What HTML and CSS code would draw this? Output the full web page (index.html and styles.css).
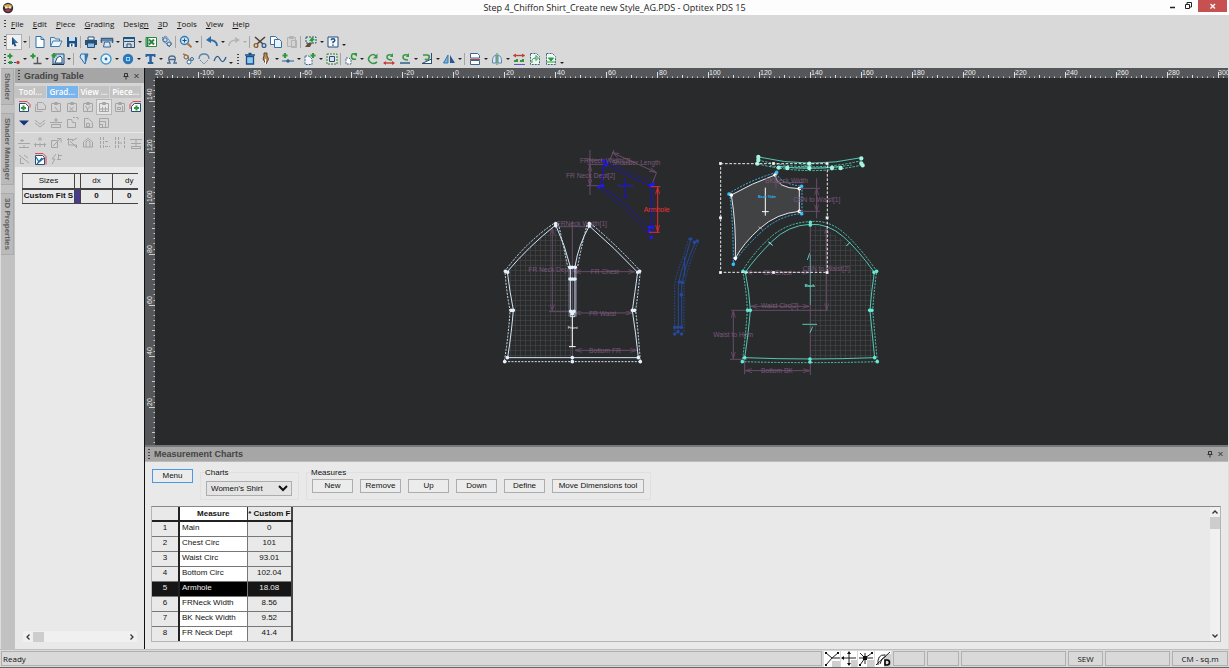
FILE: index.html
```html
<!DOCTYPE html>
<html lang="en">
<head>
<meta charset="utf-8">
<title>Optitex PDS 15</title>
<link rel="stylesheet" href="styles.css">
</head>
<body>
<div class="app">
<header class="titlebar">
  <svg class="logo" viewBox="0 0 12 12"><circle cx="6" cy="6" r="5.2" fill="#3c2a35"/><path d="M1.5 4Q6 0 10.5 4L8 6H4Z" fill="#c9a94f"/><path d="M3 8Q6 12 9 8L6 7Z" fill="#b23a4a"/><path d="M3 4.500h2.500v2H3zM6.800 4.500h2.500v2H6.800z" fill="#f3ecd2"/></svg>
  <h1>Step 4_Chiffon Shirt_Create new Style_AG.PDS - Optitex PDS 15</h1>
  <div class="winbtns">
    <button aria-label="Minimize"><svg viewBox="0 0 16 12"><path d="M5 7.500h5" stroke="#222" stroke-width="1.500"/></svg></button>
    <button aria-label="Restore"><svg viewBox="0 0 16 12"><path d="M4.500 4.500h4v4h-4zM6 4V2.500h4.500V7H9" fill="none" stroke="#222"/></svg></button>
    <button class="close" aria-label="Close"><svg viewBox="0 0 16 12"><path d="M5.500 4l4.500 4.500M10 4L5.500 8.500" stroke="#fff" stroke-width="1.300"/></svg></button>
  </div>
</header>

<nav class="menubar">
  <i class="grip"></i>
  <button><u>F</u>ile</button><button><u>E</u>dit</button><button><u>P</u>iece</button><button><u>G</u>rading</button><button>Desig<u>n</u></button><button><u>3</u>D</button><button><u>T</u>ools</button><button><u>V</u>iew</button><button><u>H</u>elp</button>
</nav>

<div class="toolbar">
  <i class="grip"></i>
  <button class="tool on" aria-label="Select"><svg><path d="M6 3l6 6H9l1.500 3-2 .5L7.500 10 6 11z" fill="#1f4e79"/><path d="M6 3l6 6H9z" fill="#2f78b5"/></svg></button><i class="caret"></i><i class="sep"></i>
  <button class="tool" aria-label="New"><svg><path d="M4 2.500h5l3 3v8H4z" fill="#fff" stroke="#2f6ea8"/><path d="M9 2.500v3h3" fill="none" stroke="#2f6ea8"/></svg></button>
  <button class="tool" aria-label="Open"><svg><path d="M2.500 12.500v-9h4l1 1.500h4v2" fill="#dcebf6" stroke="#3e7cab"/><path d="M2.500 12.500l2.500-5.500h9l-2.500 5.500z" fill="#eaf4fb" stroke="#3e7cab"/></svg></button>
  <button class="tool" aria-label="Save"><svg><path d="M3 3h9l1 1v9H3z" fill="#1d4f86"/><path d="M5 3h6v4H5z" fill="#bfe0f5"/><path d="M5.500 9.500h5V13h-5z" fill="#fff"/><path d="M7 10h1.500v2.500H7z" fill="#1d4f86"/></svg></button><i class="sep"></i>
  <button class="tool" aria-label="Print"><svg><path d="M5 3h6v3H5z" fill="#fff" stroke="#274f78"/><path d="M2 6h12v5H2z" fill="#274f78"/><path d="M4.500 9h7v4.500h-7z" fill="#8ebfe2" stroke="#274f78"/></svg></button>
  <button class="tool" aria-label="Plot"><svg><path d="M2.500 9V4.500h11V9M1.500 6.500h13" fill="none" stroke="#3a5f86" stroke-width="1.400"/><path d="M4.500 13l1-5h5l1 5z" fill="#d4e8f6" stroke="#3a5f86"/><path d="M3 5h10v2H3z" fill="#5b87ae"/></svg></button><i class="caret"></i>
  <button class="tool" aria-label="Plot layout"><svg><path d="M2.500 3.500h11v4h-11z" fill="#b9d7ec" stroke="#274f78"/><path d="M2.500 8v5.500h11V8M6 13v-3h4v3" fill="none" stroke="#274f78"/><path d="M2.500 4h11" stroke="#274f78" stroke-width="2"/></svg></button><i class="caret"></i>
  <button class="tool" aria-label="Export to Excel"><svg><path d="M3 3.500h10.500v9H3z" fill="#fff" stroke="#2c8443"/><path d="M3.500 4h2v8h-2z" fill="#2c8443"/><path d="M6 5.500l5 5M11 5.500l-5 5" stroke="#2c8443" stroke-width="2"/></svg></button>
  <button class="tool" aria-label="Find piece"><svg><path d="M3 4l4-2 6 8-3 3z" fill="#cfe2f1" stroke="#3a6791" stroke-dasharray="1.500 1"/><circle cx="6" cy="6" r="2.200" fill="none" stroke="#3a6791"/><circle cx="10" cy="10" r="2" fill="none" stroke="#3a6791"/></svg></button><i class="sep"></i>
  <button class="tool" aria-label="Zoom"><svg><circle cx="6.500" cy="6.500" r="4" fill="#c5e5f8" stroke="#347ab2" stroke-width="1.400"/><path d="M6.500 4.500v4M4.500 6.500h4" stroke="#1d4f86"/><path d="M9.500 9.500l4 3.800" stroke="#b5713a" stroke-width="2"/></svg></button><i class="caret"></i><i class="sep"></i>
  <button class="tool" aria-label="Undo"><svg><path d="M13 12Q13 6 5 6" fill="none" stroke="#2c6da4" stroke-width="1.800"/><path d="M2 6l5-4v7z" fill="#2c6da4"/></svg></button><i class="caret"></i>
  <button class="tool off" aria-label="Redo"><svg><path d="M3 12Q3 6 11 6" fill="none" stroke="#b5b5b5" stroke-width="1.500"/><path d="M14 6l-5-3v6z" fill="#b5b5b5"/></svg></button><i class="caret dim"></i><i class="sep"></i>
  <button class="tool" aria-label="Cut"><svg><path d="M3 3l8 7M13 3l-8 7" stroke="#4b4037" stroke-width="1.600"/><circle cx="4" cy="11.500" r="1.900" fill="none" stroke="#8c5a2a" stroke-width="1.300"/><circle cx="12" cy="11.500" r="1.900" fill="none" stroke="#2f5e8f" stroke-width="1.300"/></svg></button>
  <button class="tool" aria-label="Copy"><svg><path d="M2.500 2.500h5l2 2v6h-7z" fill="#fff" stroke="#3a6f9f"/><path d="M6.500 5.500h5l2 2v6h-7z" fill="#e9f3fa" stroke="#3a6f9f"/></svg></button>
  <button class="tool off" aria-label="Paste"><svg><path d="M3.500 3.500h8v9h-8zM5.500 2.500h4v2h-4zM7.500 6.500h5v7h-5z" fill="#d4d4d4" stroke="#b3b3b3"/></svg></button><i class="sep"></i>
  <button class="tool" aria-label="Send to modulate"><svg><path d="M3 3h10v6H3z" fill="#cfe4d3" stroke="#274f78" stroke-dasharray="2 1"/><path d="M9 10L8 7H6l3-4 3 3-2 .5z" fill="#2e9a3c"/><path d="M2 13l3-4h4l-2 4z" fill="#6b4a35"/></svg></button><i class="caret"></i>
  <button class="tool" aria-label="Help"><svg><path d="M3 3h10v10H3z" fill="#f6fafd" stroke="#274f78"/><path d="M6.200 6.200Q6.200 4.800 8 4.800T9.800 6.400Q9.800 7.200 8 8v1.200" fill="none" stroke="#1d4f86" stroke-width="1.500"/><path d="M7.200 10.500h1.600v1.300H7.200z" fill="#1d4f86"/></svg></button><i class="caret low"></i>
</div>

<div class="toolbar">
  <i class="grip"></i>
  <button class="tool" aria-label="Add point"><svg><path d="M2 11.500h12" stroke="#274f78" stroke-dasharray="2 1"/><path d="M4 2.500v5M1.500 5h5" stroke="#2e9a3c" stroke-width="2"/><path d="M3 10h3v3H3z" fill="#2f9b40"/><circle cx="12" cy="11.500" r="1.700" fill="#c33c3c"/></svg></button><i class="caret"></i>
  <button class="tool" aria-label="Add notch"><svg><path d="M5 2.500v5M2.500 5h5" stroke="#2e9a3c" stroke-width="2"/><path d="M5.500 12.500h8M9.500 6v6" stroke="#555" stroke-width="1.300"/></svg></button><i class="caret"></i>
  <button class="tool" aria-label="Trace piece"><svg><path d="M3 3h11v10H3z" fill="#bcd7e8" stroke="#274f78"/><path d="M5 12l2-5 3-2 2 2v5z" fill="#fff" stroke="#274f78"/><path d="M4 2v5M1.500 4.500h5" stroke="#2e9a3c" stroke-width="2"/><path d="M2 13.500h12" stroke="#1b3555"/></svg></button><i class="caret"></i><i class="sep"></i>
  <button class="tool" aria-label="Dart"><svg><path d="M5 3h7L9 13 4 6z" fill="#cfe7f6" stroke="#2c6da4"/><path d="M8.500 3H12L9 13z" fill="#2f78b5"/></svg></button><i class="caret"></i>
  <button class="tool" aria-label="Circle"><svg><circle cx="8" cy="8" r="5" fill="#e8f5fd" stroke="#4a9ad0" stroke-width="1.400"/><circle cx="8" cy="8" r="1.400" fill="#2c6da4"/></svg></button><i class="caret"></i>
  <button class="tool" aria-label="Button"><svg><circle cx="8" cy="8" r="5.200" fill="#2b79bd"/><path d="M6.500 6v4M9.500 6v4M6 6.500h4M6 9.500h4" stroke="#a9d4f0"/></svg></button><i class="caret"></i>
  <button class="tool" aria-label="Text"><svg><path d="M3.500 3h10v3h-1.500V5.300H9.800V11h1.500v2H5.800v-2h1.500V5.300H5V6H3.500z" fill="#2562a0"/></svg></button><i class="caret"></i>
  <button class="tool" aria-label="Pleat"><svg><path d="M3 12h3Q2.500 5 8 5t2 7h3M5 8.500h6" fill="none" stroke="#47698f" stroke-width="1.300"/></svg></button>
  <button class="tool" aria-label="Seam"><svg><path d="M3 3l5 2 1 5" fill="none" stroke="#b5713a" stroke-width="1.400"/><circle cx="6" cy="6" r="2" fill="#e8dcc9" stroke="#746050"/><circle cx="9" cy="11" r="2" fill="#fff" stroke="#2c6da4"/><circle cx="12" cy="8" r="1.500" fill="none" stroke="#2c6da4"/></svg></button>
  <button class="tool" aria-label="Arc"><svg><path d="M3 8Q3 3 8 3t5 5" fill="none" stroke="#5585ad" stroke-width="1.300"/><path d="M4 9l4 4 4-4" fill="none" stroke="#5585ad" stroke-dasharray="2 1"/></svg></button>
  <button class="tool" aria-label="Wave"><svg><path d="M2 10Q5 2 8 8t6-2" fill="none" stroke="#2c5f8f" stroke-width="1.300"/></svg></button><i class="caret low"></i>
  <i class="grip second"></i>
  <button class="tool" aria-label="Delete"><svg><path d="M4.500 5.500h7V13h-7z" fill="#8cc9ee" stroke="#1d4f86" stroke-width="1.300"/><path d="M3 4h10M6.500 2.500h3" stroke="#1d4f86" stroke-width="1.500"/></svg></button>
  <button class="tool" aria-label="Pen"><svg><path d="M6 2h3v3l1.500 3L8 13 5 8l1-3z" fill="#c08a56" stroke="#5a4130"/><path d="M7.500 8v5" stroke="#fff"/></svg></button><i class="caret"></i>
  <button class="tool" aria-label="Align"><svg><path d="M5 2v5M2.500 4.500h5" stroke="#2e9a3c" stroke-width="2"/><path d="M2 10h12" stroke="#2f5e8f"/><circle cx="8" cy="10" r="1.700" fill="#2f5e8f"/></svg></button><i class="caret"></i>
  <button class="tool" aria-label="Move piece"><svg><path d="M3 5h4l3 3v5.500H3z" fill="#f2f6fa" stroke="#3a6791" stroke-dasharray="2 1"/><path d="M8.500 4.500h5M11 2v5" stroke="#2e9a3c" stroke-width="2"/></svg></button><i class="caret"></i>
  <button class="tool" aria-label="Select internal"><svg><path d="M3 3h10v10H3z" fill="#dbe7da" stroke="#2e7a3c" stroke-dasharray="2 1"/><path d="M5.500 5.500h5v5h-5z" fill="#e9d9ef" stroke="#274f78"/></svg></button><i class="sep"></i>
  <button class="tool" aria-label="Rotate copy"><svg><path d="M3 7h3l2 2v4H3z" fill="#fff" stroke="#3a6791" stroke-dasharray="2 1"/><path d="M13 8Q8 9 8.500 5T13 4" fill="none" stroke="#2e9a3c" stroke-width="1.600"/><path d="M11 2h3v4z" fill="#2e9a3c"/></svg></button><i class="caret"></i>
  <button class="tool" aria-label="Rotate"><svg><path d="M12 11Q8 14 5 11T5 5t6 0" fill="none" stroke="#3a9748" stroke-width="1.600"/><path d="M12.500 2.500v5H8z" fill="#3a9748"/></svg></button>
  <button class="tool" aria-label="Rotate segment"><svg><path d="M11 9Q6 9 6 6t5-2" fill="none" stroke="#3a9748" stroke-width="1.600"/><path d="M12 2v4H9z" fill="#3a9748"/><path d="M3 12h10" stroke="#c33c3c" stroke-width="1.400"/><path d="M5 10l-3 2 3 2zM11 10l3 2-3 2z" fill="#c33c3c"/></svg></button>
  <button class="tool" aria-label="Rotate line"><svg><path d="M11 9Q6 9 6 6t5-2" fill="none" stroke="#3a9748" stroke-width="1.600"/><path d="M12 2v4H9z" fill="#3a9748"/><path d="M3 12h10" stroke="#2f5e8f" stroke-width="1.500"/></svg></button><i class="caret"></i>
  <button class="tool" aria-label="Turn to axis"><svg><path d="M12.500 2v11" stroke="#274f78"/><path d="M4 4h4q3 0 2 3t-4 1" fill="none" stroke="#3a9748" stroke-width="1.700"/><path d="M3 12.500h9.500V8z" fill="#fff" stroke="#274f78"/></svg></button><i class="caret"></i>
  <button class="tool" aria-label="Mirror"><svg><path d="M2.500 12L7 4v8z" fill="#79b0dc" stroke="#3a7ab0"/><path d="M9 4v8h5z" fill="#245b92"/></svg></button><i class="caret"></i><i class="sep"></i>
  <button class="tool" aria-label="Split"><svg><path d="M3.500 2.500h7l2 2V7h-9zM3.500 9.500h9v4h-9z" fill="#fff" stroke="#3a6791"/><path d="M3 8.500h10" stroke="#c33c3c"/></svg></button><i class="caret"></i>
  <button class="tool" aria-label="Fold"><svg><path d="M7 12H3.500Q3 5 7 4zM9 12h3.500Q13 5 9 4z" fill="#dceaf5" stroke="#5f87ab"/><path d="M8 2v12" stroke="#3f8f50"/></svg></button><i class="caret"></i>
  <button class="tool" aria-label="Walk"><svg><path d="M2.500 4.500h11" stroke="#c33c3c" stroke-width="1.400"/><path d="M5 2.500l-3 2 3 2zM11 2.500l3 2-3 2z" fill="#c33c3c"/><path d="M3 10h3V8M9 10h3V8" fill="none" stroke="#2e9a3c" stroke-width="2"/><path d="M3 13.500h11" stroke="#5c53c4"/></svg></button>
  <button class="tool" aria-label="Seam allowance"><svg><path d="M3.500 2.500h6l3 3v8h-9z" fill="#f0f6f2" stroke="#3a6791" stroke-dasharray="2 1"/><path d="M5 12q-1-5 4-5M9 4.500l2.500 2.500L9 9.500z" stroke="#2e9a3c" fill="none"/></svg></button>
  <button class="tool" aria-label="Remove seam"><svg><path d="M3.500 2.500h6l3 3v8h-9z" fill="#f0f6f2" stroke="#3a6791" stroke-dasharray="2 1"/><path d="M5.500 7L8 10l2.500-3zM3 11h10" stroke="#2e9a3c" fill="#2e9a3c"/></svg></button><i class="caret low"></i>
</div>

<main class="main">
  <aside class="sidetabs">
    <button>Shader</button><button>Shader Manager</button><button>3D Properties</button>
  </aside>

  <section class="grading">
    <div class="panelhead"><i class="grip"></i><h2>Grading Table</h2>
      <svg class="pin" viewBox="0 0 20 10"><path d="M3.500 2.500h3v3h-3zM2.500 5.500h5M5 5.500V8.500" fill="none" stroke="#333"/><path d="M13.500 3l4 4M17.500 3l-4 4" stroke="#333"/></svg></div>
    <div class="tabs"><button>Tool...</button><button class="active">Grad...</button><button>View ...</button><button>Piece...</button></div>
    <div class="icons first">
      <button class="tool" aria-label="Add size"><svg><path d="M3.500 4.500h6l3 3v5h-9z" fill="#fff" stroke="#274f78"/><path d="M7.500 6.500v5M5 9h5" stroke="#2e9a3c" stroke-width="2"/><path d="M3 2.500h8l3 3v3" fill="none" stroke="#e04848"/></svg></button>
      <button class="tool dis" aria-label="Copy grading"><svg><path d="M5.500 3.500h5l3 3v4h-8zM3.500 7.500v5h7"/><path d="M3 6h3"/></svg></button>
      <button class="tool dis" aria-label="Paste grading"><svg><path d="M3.500 4.500h9v8h-9zM6.500 3.500h3v2h-3zM7 8l3 4"/></svg></button>
      <button class="tool dis" aria-label="Paste X"><svg><path d="M3.500 4.500h9v8h-9zM6.500 3.500h3v2h-3zM5.500 8l4 4M9.500 8l-4 4"/></svg></button>
      <button class="tool dis" aria-label="Paste Y"><svg><path d="M3.500 4.500h9v8h-9zM6.500 3.500h3v2h-3zM5.500 7l2 3 3-3M7.500 10v2"/></svg></button>
      <button class="tool dis boxed" aria-label="Paste absolute"><svg><path d="M3.500 4.500h9v8h-9zM6.500 3.500h3v2h-3zM4 10h8M6.500 8v4M9.500 8v4"/></svg></button>
      <button class="tool dis" aria-label="Paste relative"><svg><path d="M3.500 4.500h9v8h-9zM6.500 3.500h3v2h-3zM5.500 8.500h3v2h-3zM10.500 7v5"/></svg></button>
      <button class="tool" aria-label="Import"><svg><path d="M12.500 4.500h-6l-3 3v5h9z" fill="#fff" stroke="#274f78"/><path d="M8.500 6.500v5M6 9h5" stroke="#2e9a3c" stroke-width="2"/><path d="M13 2.500H5l-3 3V10" fill="none" stroke="#e04848"/></svg></button>
      <button class="tool" aria-label="Down"><svg><path d="M3 5.500h10l-5 5z" fill="#15357e"/></svg></button>
      <button class="tool dis" aria-label="Merge"><svg><path d="M3 5.500q2 0 5 4 3-4 5-4M3 8l5 4 5-4"/></svg></button>
      <button class="tool dis" aria-label="Stack"><svg><path d="M2 7.500h12M3.500 9.500h9v3h-9zM6 5h4M8 3v4"/></svg></button>
      <button class="tool dis" aria-label="Grade copy"><svg><path d="M3.500 4.500h4l1 3h3v5h-8zM9 2.500h2M12 2.500h2v2"/></svg></button>
      <button class="tool dis" aria-label="Round"><svg><path d="M4.500 3.500h4l4 4v5h-8zM6.500 8.500h3v3h-3z"/></svg></button>
      <button class="tool dis" aria-label="Nest"><svg><path d="M3.500 3.500h9v9M3.500 3.500v9h9M3.500 6.500h6v6M3.500 9.500h3v3"/></svg></button>
    </div>
    <div class="icons second">
      <button class="tool dis" aria-label="Align left"><svg><path d="M2 8.500h12M3 12.500h10M6 4v3M4 5.500h4M8 10v3"/></svg></button>
      <button class="tool dis" aria-label="Align centre"><svg><path d="M2 9.500h12M3.500 8v4M8 2v4M6 4h4M8 8v4M12.500 8v4"/></svg></button>
      <button class="tool dis" aria-label="Proportional"><svg><path d="M3.500 5.500h6v7h-6zM5 11l7-7M9 3.500h4v4"/></svg></button>
      <button class="tool dis" aria-label="Along line"><svg><path d="M4.500 3v7h8v3M3 4.500h6M8 6l5-3M6 6l6 6"/></svg></button>
      <button class="tool dis" aria-label="Symmetric"><svg><path d="M3.500 12V7L8 3l4.500 4v5zM6 12V7l2-2 2 2v5"/></svg></button>
      <button class="tool dis" aria-label="Distribute left"><svg><path d="M4.500 2v12M7.500 2v12M9 6.500h4M9 11.500h5" stroke-dasharray="3 1"/></svg></button>
      <button class="tool dis" aria-label="Distribute right"><svg><path d="M3.500 2v12M6.500 2v12M7 8h4M12.500 2v12" stroke-dasharray="3 1"/></svg></button>
      <button class="tool dis" aria-label="Distribute down"><svg><path d="M2 4.500h12M3 8.500h10M8 5v6M3.500 11.500h9v2h-9z"/></svg></button>
      <button class="tool dis" aria-label="Angle"><svg><path d="M3 4l10 8M4.500 12V7M4 12.500h4M8 4l4 3"/></svg></button>
      <button class="tool" aria-label="Apply grading"><svg><path d="M3.500 4.500h7l2 2v7h-9z" fill="#fff" stroke="#274f78"/><path d="M4 6l3 5 5-4M5 13l5-6" fill="none" stroke="#2c6da4" stroke-width="1.300"/><path d="M3 2.500h8l3 3v8" fill="none" stroke="#e04848"/></svg></button>
      <button class="tool dis" aria-label="Grade rule"><svg><path d="M4 13l3-5h-3l4-5M10 4.500h4M9 8.500h4M10.500 3v5"/></svg></button>
    </div>
    <div class="gradebody">
      <table class="sizes">
        <colgroup><col class="c1"><col class="c2"><col class="c3"><col class="c4"></colgroup>
        <tr><th>Sizes</th><th></th><th>dx</th><th>dy</th></tr>
        <tr><td>Custom Fit S</td><td class="swatch"></td><td>0</td><td>0</td></tr>
      </table>
      <div class="hscroll"><button aria-label="Scroll left"><svg viewBox="0 0 8 8"><path d="M5.500 1.500L3 4l2.500 2.500" fill="none" stroke="#333" stroke-width="1.300"/></svg></button><i></i><button class="end" aria-label="Scroll right"><svg viewBox="0 0 8 8"><path d="M2.500 1.500L5 4 2.500 6.500" fill="none" stroke="#333" stroke-width="1.300"/></svg></button></div>
    </div>
  </section>

  <section class="work">
    <svg class="canvas" role="img" aria-label="Pattern workspace">
      <defs>
        <pattern id="hticks" x="453" y="68" width="51" height="10" patternUnits="userSpaceOnUse"><path d="M.5 4v6" stroke="#ddd"/><path d="M25.500 7v3" stroke="#ddd"/><path d="M5.500 8.500v1.500M10.500 8.500v1.500M15.500 8.500v1.500M20.500 8.500v1.500M30.500 8.500v1.500M35.500 8.500v1.500M40.500 8.500v1.500M46.500 8.500v1.500" stroke="#ccc"/></pattern>
        <pattern id="vticks" x="145" y="101" width="10" height="51" patternUnits="userSpaceOnUse"><path d="M4 .5h6M7 25.500h3M8.500 5.500H10M8.500 10.500H10M8.500 15.500H10M8.500 20.500H10M8.500 30.500H10M8.500 35.500H10M8.500 40.500H10M8.500 46.500H10" stroke="#ccc"/></pattern>
        <pattern id="mesh" width="15" height="15" patternUnits="userSpaceOnUse"><path d="M0 1.500h15M1.500 0v15" stroke="#434547" stroke-width="2"/></pattern>
        <marker id="arr" viewBox="0 0 24 14" refX="22" refY="7" markerWidth="24" markerHeight="14" markerUnits="userSpaceOnUse" orient="auto-start-reverse"><path d="M2 1l20 6L2 13" fill="none" stroke="context-stroke" stroke-width="2.500"/></marker>
      </defs>
      <g transform="translate(-145 -68)">
        <rect x="145" y="68" width="4000" height="10" fill="#55565a"/>
        <rect x="145" y="68" width="10" height="2000" fill="#55565a"/>
        <rect x="155" y="68" width="4000" height="10" fill="url(#hticks)"/>
        <rect x="145" y="78" width="10" height="2000" fill="url(#vticks)"/>
        <g class="rlabel">
          <text x="155" y="75">20</text><text x="200" y="75">-100</text><text x="251" y="75">-80</text><text x="302" y="75">-60</text><text x="353" y="75">-40</text><text x="404" y="75">-20</text><text x="455" y="75">0</text><text x="506" y="75">20</text><text x="557" y="75">40</text><text x="608" y="75">60</text><text x="659" y="75">80</text><text x="709" y="75">100</text><text x="760" y="75">120</text><text x="811" y="75">140</text><text x="862" y="75">160</text><text x="913" y="75">180</text><text x="964" y="75">200</text><text x="1015" y="75">220</text><text x="1066" y="75">240</text><text x="1117" y="75">260</text><text x="1168" y="75">280</text><text x="1218" y="75">300</text>
          <text transform="translate(152 100) rotate(-90)">140</text><text transform="translate(152 151) rotate(-90)">120</text><text transform="translate(152 202) rotate(-90)">100</text><text transform="translate(152 253) rotate(-90)">80</text><text transform="translate(152 304) rotate(-90)">60</text><text transform="translate(152 355) rotate(-90)">40</text><text transform="translate(152 406) rotate(-90)">20</text>
        </g>

        <g transform="translate(495 145) scale(.3333)">
          <path d="M182 240Q100 305 37 380Q44 440 55 495L38 638H232V515H226V365Q210 300 182 240Z" fill="url(#mesh)"/>
          <g class="dim">
            <path d="M232 228V650M182 245H300M162 500H225"/>
            <path class="ar" d="M172 250V498"/><path class="ar" d="M238 380H420"/><path class="ar" d="M238 504H412"/><path class="ar" d="M240 616H426"/><path class="ar" d="M285 60V122"/>
            <path d="M285 15V150M275 45H330M275 122H322M345 45L357 15M470 120L485 82M278 58H330"/><path class="ar" d="M352 23L483 82"/>
            <text x="185" y="243">FRNeck Width[1]</text><text x="100" y="380">FR Neck Dept[1]</text><text x="287" y="387">FR Chest</text><text x="282" y="512">FR Waist</text><text x="282" y="623">Bottom FR</text><text x="255" y="53">FRNeck Width[2]</text><text x="350" y="61">Shoulder Length</text><text x="213" y="98">FR Neck Dept[2]</text>
          </g>
          <g fill="none" stroke="#d3e6f5" stroke-width="3">
            <path d="M182 240Q100 305 37 380Q44 440 55 495Q50 560 38 638H430Q422 560 412 497Q420 440 428 382Q360 310 283 243Q250 300 240 365V515H226V365Q210 300 182 240"/>
            <path d="M176 236Q95 290 30 378Q34 440 45 495Q42 560 28 650H436Q430 560 422 497Q430 440 436 378Q370 305 288 236M190 236Q205 300 218 365M276 240Q260 300 248 365" stroke-dasharray="6 4"/>
            <path d="M232 515V605M222 605H242" stroke="#fff"/><path d="M222 365V515M244 365V515" stroke="#8890a5" stroke-width="2"/>
          </g>
          <path class="dots" stroke="#e4f1fb" d="M182 236h0M182 242h0M283 236h0M283 243h0M31 379h0M38 382h0M428 382h0M434 379h0M48 496h0M55 496h0M412 496h0M419 496h0M37 638h0M29 650h0M430 638h0M436 650h0M232 638h0M232 650h0M224 367h0M232 367h0M241 367h0M225 402h0M232 402h0M240 402h0M227 499h0M237 499h0M232 507h0"/>
          <text x="218" y="553" fill="#fff" font-size="13">Front</text>
          <g fill="none" stroke="#1c12c8" stroke-width="3">
            <path d="M330 58Q400 95 467 122V258Q400 175 318 125L325 58Z" stroke-dasharray="12 3"/>
            <path d="M332 48Q410 85 476 115V270M462 272Q390 185 310 128M330 45L320 125" stroke-dasharray="5 4"/>
            <path d="M391 100V155M380 120H400M384 152L391 160 398 152"/>
          </g>
          <path class="dots" stroke="#2119e8" d="M326 48h0M334 59h0M323 122h0M312 126h0M467 122h0M475 117h0M464 247h0M473 247h0M463 259h0M469 277h0"/>
          <text x="370" y="125" fill="#2119e8" font-size="10">Front Yoke</text>
          <g stroke="#e32c32" fill="none" stroke-width="3"><path class="ar" d="M488 127V260"/><path d="M468 125H496M462 262H494"/></g>
          <text x="446" y="200" fill="#ef3035" font-size="21">Armhole</text>
        </g>

        <g transform="translate(670 145) scale(.3333)">
          <g fill="none" stroke="#254998" stroke-width="3">
            <path d="M62 283Q50 330 40 360T25 420V548M76 292Q55 340 45 375T35 430V548M44 335V395"/>
            <path d="M56 280Q44 325 32 355T14 420V560M84 292Q62 345 52 380T42 430V560" stroke-dasharray="5 4"/>
          </g>
          <path class="dots" stroke="#254998" d="M62 282h0M82 288h0M73 292h0M28 411h0M37 412h0M34 449h0M14 547h0M24 547h0M34 547h0M14 567h0M24 560h0M35 567h0"/>
          <path d="M421 240Q500 245 613 382L602 497 614 640H421Z" fill="url(#mesh)"/>
          <path d="M184 150Q245 115 315 90Q320 130 388 131V199Q320 205 270 250T196 340Q199 240 184 150Z" fill="#414244" stroke="#e8e8e8" stroke-width="3"/>
          <path d="M176 146Q240 105 320 82Q325 115 396 124V206Q330 210 275 260T190 356Q190 240 180 150" fill="none" stroke="#37b5ee" stroke-width="3" stroke-dasharray="6 4"/>
          <path d="M286 128V212M276 200H296" stroke="#fff" stroke-width="3"/><path d="M295 293l12 6M265 245l12 8" stroke="#ccc" stroke-width="2"/>
          <path class="dots" stroke="#37c0f8" d="M177 147h0M320 82h0M395 124h0M395 206h0M190 358h0"/>
          <path class="dots" stroke="#fff" d="M184 150h0M315 90h0M388 131h0M388 199h0M196 340h0"/>
          <text x="264" y="158" fill="#25b7f5" font-size="11" font-weight="bold">Back Yoke</text>
          <g class="dim">
            <path d="M421 235V690M183 496H475M180 643H230M224 645V688M388 130H450M388 199H450M440 100V220M318 90V130M315 113H400"/>
            <path class="ar" d="M226 382H418"/><path class="ar" d="M242 484H418"/><path class="ar" d="M470 246V495"/><path class="ar" d="M190 498V641"/><path class="ar" d="M226 677H419"/><path class="ar" d="M440 130V199"/>
            <text x="285" y="115">BKNeck Width</text><text x="370" y="172">CBN to Waist[1]</text><text x="398" y="377">CBN to Waist[2]</text><text x="281" y="389">BK Chest</text><text x="273" y="490">Waist Circ[2]</text><text x="130" y="576">Waist to Hem</text><text x="273" y="684">Bottom BK</text>
          </g>
          <g fill="none" stroke="#55c8b5" stroke-width="3">
            <path d="M226 382Q238 440 241 496 236 560 224 638 320 642 421 642 520 642 614 638 606 560 600 497 604 440 613 382 565 315 520 275T421 238Q355 240 305 290T226 382Z"/>
            <path d="M218 378Q230 440 232 496 228 560 217 650 420 656 622 650 614 560 608 497 612 440 620 378 565 300 520 262T421 230Q350 232 298 280T218 378" stroke-dasharray="6 4"/>
            <path d="M421 330V480" stroke-width="2"/><path d="M397 538H441M420 563L428 545M412 345L419 325"/>
            <path d="M264 45Q420 85 574 47M264 57Q420 95 576 60M300 62Q420 78 545 60" stroke-dasharray="7 4"/><path d="M266 36Q420 72 574 38M326 64Q420 75 512 65"/>
          </g>
          <path class="dots" stroke="#66e8d2" d="M219 379h0M227 382h0M612 382h0M620 379h0M233 496h0M241 496h0M599 496h0M606 496h0M224 638h0M217 650h0M614 638h0M622 650h0M420 642h0M420 651h0M421 232h0M421 240h0"/>
          <path d="M296 290l12 12M541 291l-12 12" stroke="#66e8d2" stroke-width="3"/>
          <path class="dots big" stroke="#a3f5df" d="M265 36h0M265 45h0M262 56h0M574 40h0M574 55h0M578 61h0M326 68h0M352 69h0M418 56h0M418 69h0M486 69h0M512 69h0"/>
          <text x="392" y="66" fill="#66e8d2" font-size="13">Collar</text><text x="404" y="427" fill="#66e8d2" font-size="13" font-weight="bold">Back</text>
          <path d="M152 56H472V382H152Z" fill="none" stroke="#eee" stroke-width="3" stroke-dasharray="8 5"/>
          <path d="M147 51h9v9h-9zM306 51h9v9h-9zM467 51h9v9h-9zM147 214h9v9h-9zM467 214h9v9h-9zM147 378h9v9h-9zM306 378h9v9h-9zM467 378h9v9h-9z" fill="#fff" stroke="#333"/>
        </g>
      </g>
    </svg>

    <section class="measure">
      <div class="panelhead"><i class="grip"></i><h2>Measurement Charts</h2>
        <svg class="pin" viewBox="0 0 20 10"><path d="M3.500 2.500h3v3h-3zM2.500 5.500h5M5 5.500V8.500" fill="none" stroke="#333"/><path d="M13.500 3l4 4M17.500 3l-4 4" stroke="#333"/></svg></div>
      <div class="controls">
        <button class="btn menu">Menu</button>
        <div class="group charts"><label for="chart">Charts</label>
          <select id="chart"><option>Women's Shirt</option></select></div>
        <div class="group measures" role="group" aria-labelledby="ml"><span id="ml">Measures</span>
          <div class="row"><button class="btn">New</button><button class="btn">Remove</button><button class="btn">Up</button><button class="btn">Down</button><button class="btn">Define</button><button class="btn wide">Move Dimensions tool</button></div></div>
      </div>
      <div class="sheet">
        <div class="rows">
        <table>
          <colgroup><col class="n"><col class="m"><col class="v"></colgroup>
          <thead><tr><th></th><th>Measure</th><th>* Custom F</th></tr></thead>
          <tbody>
          <tr><td>1</td><td>Main</td><td>0</td></tr>
          <tr><td>2</td><td>Chest Circ</td><td>101</td></tr>
          <tr><td>3</td><td>Waist Circ</td><td>93.01</td></tr>
          <tr><td>4</td><td>Bottom Circ</td><td>102.04</td></tr>
          <tr class="sel"><td>5</td><td>Armhole</td><td>18.08</td></tr>
          <tr><td>6</td><td>FRNeck Width</td><td>8.56</td></tr>
          <tr><td>7</td><td>BK Neck Width</td><td>9.52</td></tr>
          <tr><td>8</td><td>FR Neck Dept</td><td>41.4</td></tr>
          </tbody>
        </table>
        </div>
        <div class="vscroll"><button aria-label="Scroll up"><svg viewBox="0 0 8 8"><path d="M1.500 5.500L4 3l2.500 2.500" fill="none" stroke="#333" stroke-width="1.300"/></svg></button><i></i><button class="end" aria-label="Scroll down"><svg viewBox="0 0 8 8"><path d="M1.500 2.500L4 5l2.500-2.500" fill="none" stroke="#333" stroke-width="1.300"/></svg></button></div>
      </div>
    </section>
  </section>
</main>

<footer class="status">
  <span class="cell ready">Ready</span>
  <span class="modes">
    <button aria-label="Snap to point"><svg viewBox="0 0 16 16"><path d="M8 10h8v6H8z" fill="#cfcfcf"/><path d="M2 2l6 5-6 7M8 7l6-5M8 7h8" fill="none" stroke="#222"/><path d="M1 1h2v2H1zM13 1h2v2h-2zM1 13h2v2H1z" fill="#111"/></svg></button>
    <button aria-label="Snap to grid"><svg viewBox="0 0 16 16"><path d="M10 9h6v7h-6z" fill="#cfcfcf"/><path d="M1 7h14M8 1v13" stroke="#222"/><path d="M6 3l2-3 2 3zM6 12l2 3 2-3zM3 5L0 7l3 2z" fill="#111"/></svg></button>
    <button aria-label="Snap to intersection"><svg viewBox="0 0 16 16"><path d="M9 9h7v7H9z" fill="#cfcfcf"/><path d="M2 2l5 5-5 7M7 7l7-5M1 7h14M7 2v11" fill="none" stroke="#222"/><path d="M5 5h4v4H5zM13 1h2v2h-2zM1 13h2v2H1z" fill="#111"/></svg></button>
    <button aria-label="Dimension mode"><svg viewBox="0 0 16 16"><path d="M9 3h7v13H9z" fill="#cfcfcf"/><path d="M1 14L15 1M3 14q-1-11 7-10M5 13q1-6 6-8" fill="none" stroke="#222"/><path d="M10 9h2q2.500 0 2.500 2.500T12 14h-2z" fill="#ddd" stroke="#000" stroke-width="1.600"/></svg></button>
  </span>
  <span class="cell w1"></span><span class="cell w1"></span><span class="cell w2"></span><span class="cell w3">SEW</span><span class="cell w4"></span><span class="cell w5">CM - sq.m</span>
</footer>
</div>
</body>
</html>
```
FILE: styles.css
```css
* { box-sizing: border-box; }
html, body { height: 100%; margin: 0; }
body { font: 8px/12px "Liberation Sans", Arial, sans-serif; color: #111; background: #d9d9d9; }
button, select { font: inherit; color: inherit; margin: 0; padding: 0; border: 0; border-radius: 0; background: none; }
h1, h2 { margin: 0; font-size: inherit; }
i { display: block; flex: none; }
table { border-collapse: collapse; table-layout: fixed; }
td, th { padding: 0; }

.app { height: 100vh; display: flex; flex-direction: column; overflow: hidden; border-bottom: 1px solid #666; }

.titlebar { display: grid; grid-template-columns: 1fr auto 1fr; height: 15px; flex: none; background: #fdfdfd; font-family: "Open Sans", "Noto Sans", sans-serif; }
.titlebar h1 { font-weight: 400; font-size: 9px; line-height: 16px; white-space: nowrap; color: #222; }
.logo { width: 12px; height: 12px; margin: 2px 0 0 2px; }
.winbtns { display: flex; justify-content: flex-end; height: 12px; padding-right: 2px; }
.winbtns button { width: 16px; display: flex; justify-content: center; }
.winbtns svg { width: 16px; height: 12px; }
.winbtns .close { width: 29px; margin-left: 1px; background: #c75050; }

.grip { width: 2px; height: 11px; background: repeating-linear-gradient(#444 0 1px, transparent 1px 3px); }
.menubar { display: flex; align-items: center; gap: 9px; height: 18px; flex: none; padding-left: 4px; font: 8px/14px "Open Sans", "Noto Sans", sans-serif; }
.menubar .grip { margin-right: -4px; height: 8px; }
.menubar button { white-space: nowrap; }
.toolbar { display: flex; align-items: center; height: 17px; flex: none; padding-left: 4px; }
.toolbar + .toolbar { height: 18px; }
.grip.second { margin: 0 3px; }
.tool { flex: none; width: 16px; height: 16px; display: flex; }
.tool svg { width: 16px; height: 16px; }
.tool.on { background: #f0f0f0; outline: 1px solid #b0b0b0; outline-offset: -1px; }
.caret { width: 4px; height: 0; margin: 0 1px; border: 2px solid transparent; border-top-color: #222; border-bottom: 0; }
.caret.dim { border-top-color: #aaa; }
.caret.low { align-self: flex-end; margin-bottom: 4px; }
.sep { width: 3px; height: 12px; border-left: 1px solid #a5a5a5; }
.caret + .sep { margin-left: 1px; }

.main { flex: 1; min-height: 0; display: flex; }
.sidetabs { width: 15px; flex: none; display: flex; flex-direction: column; gap: 8px; background: #c2c2c2; border-left: 1px solid #ddd; }
.sidetabs button { writing-mode: vertical-rl; width: 13px; line-height: 12px; padding: 4px 0; border: 1px solid #aaa; border-left: 0; background: #bababa; color: #606060; font-weight: 700; white-space: nowrap; text-align: left; }
.grading { width: 130px; flex: none; display: flex; flex-direction: column; background: #d5d5d5; border-right: 1px solid #111; }
.panelhead { height: 15px; flex: none; display: flex; align-items: center; gap: 4px; padding: 0 3px; background: #a6a6a6; color: #333; }
.panelhead h2 { flex: 1; font-size: 9px; font-weight: 700; color: #444; white-space: nowrap; }
.pin { width: 20px; height: 10px; }
.tabs { display: grid; grid-template-columns: repeat(4, 1fr); margin: 3px 2px 0 0; font: 8px/13px "Open Sans", "Noto Sans", sans-serif; font-weight: 600; color: #fff; }
.tabs button { height: 12px; line-height: 12px; background: #c3c3c3; border-right: 1px solid #d5d5d5; white-space: nowrap; }
.tabs .active { background: #78b5ee; }
.icons { display: grid; grid-template-columns: repeat(8, 1fr); padding: 0 4px 0 1px; }
.icons.first { padding-top: 1px; padding-bottom: 1px; border-bottom: 1px solid #e8e8e8; }
.icons.second { padding-top: 2px; }
.dis svg { fill: none; stroke: #a5a5a5; stroke-width: 1; }
.boxed { background: #e5e5e5; outline: 1px solid #b5b5b5; outline-offset: -1px; }
.gradebody { flex: 1; display: flex; flex-direction: column; justify-content: space-between; background: #e9e9e9; padding: 6px 7px 7px; }
.sizes { width: 115px; }
.sizes .c1 { width: 52px; } .sizes .c2 { width: 6px; } .sizes .c3 { width: 32px; } .sizes .c4 { width: 25px; }
.sizes th, .sizes td { height: 15px; line-height: 12px; text-align: center; border: 1px solid #444; white-space: nowrap; overflow: hidden; }
.sizes th { font-weight: 400; } .sizes td { font-weight: 700; }
.sizes th:first-child, .sizes td:first-child { border-left-color: #888; }
.sizes th:last-child, .sizes td:last-child { border-right: 0; padding-left: 8px; }
.sizes .swatch { background: #4a3a8c; }
.sizes tr:first-child th { border-bottom-width: 2px; }
.hscroll { display: flex; height: 11px; align-items: center; background: #f0f0f0; margin-left: 1px; }
.hscroll i { width: 11px; height: 10px; background: #cdcdcd; }
.hscroll button, .vscroll button { width: 10px; height: 10px; display: flex; align-items: center; justify-content: center; }
.hscroll svg, .vscroll svg { width: 8px; height: 8px; }
.hscroll .end { margin-left: auto; }

.work { flex: 1; min-width: 0; display: flex; flex-direction: column; border-right: 1px solid #ddd; }
.canvas { display: block; width: 100%; flex: 1; min-height: 0; background: #292a2c; font-family: "Liberation Sans", Arial, sans-serif; }
.rlabel { font-size: 7px; fill: #eee; }
.dim { fill: none; stroke: #684c6a; stroke-width: 3; }
.dim text { fill: #7a597a; stroke: none; font-size: 20px; }
.ar { marker-start: url(#arr); marker-end: url(#arr); }
.dots { stroke-width: 11; stroke-linecap: round; }
.dots.big { stroke-width: 13; }
.measure { height: 204px; flex: none; display: flex; flex-direction: column; background: #e9e9e9; border-top: 2px solid #777; }
.measure .panelhead { border-bottom: 1px solid #bbb; }
.controls { display: flex; gap: 7px; padding: 7px 7px 0; height: 44px; flex: none; }
.btn { width: 41px; height: 14px; line-height: 12px; border: 1px solid #adadad; background: #ececec; white-space: nowrap; }
.btn.menu { border-color: #4a98e8; }
.btn.wide { width: 92px; }
.group { position: relative; border: 1px solid #e0e0e0; height: 28px; margin-top: 3px; padding: 8px 6px 0 5px; }
.group > label, .group > span { position: absolute; top: -5px; left: 4px; line-height: 10px; background: #e9e9e9; }
.group select { display: block; width: 86px; height: 15px; border: 1px solid #adadad; background: #e4e4e4; padding: 0; }
.measures .row { display: flex; gap: 7px; margin-top: -2px; }
.sheet { flex: 1; min-height: 0; margin: 0 7px 7px 6px; display: flex; border: 1px solid #b5b5b5; border-top-color: #888; }
.rows { flex: 1; min-width: 0; overflow: hidden; }
.sheet table { width: 140px; border-right: 2px solid #444; }
.sheet .n { width: 27px; } .sheet .m { width: 68px; } .sheet .v { width: 45px; }
.sheet th { height: 14px; line-height: 12px; border-bottom: 2px solid #222; border-right: 1px solid #333; white-space: nowrap; overflow: hidden; }
.sheet td { height: 15px; line-height: 11px; vertical-align: top; text-align: center; border-bottom: 1px solid #777; border-right: 1px solid #777; }
.sheet td:first-child, .sheet th:first-child { border-right: 2px solid #222; }
.sheet td:nth-child(2), .sheet th:nth-child(2) { background: #fff; }
.sheet td:nth-child(2) { text-align: left; padding-left: 2px; }
.sheet .sel td { background: #161616; color: #eee; }
.sheet .sel td:nth-child(2) { background: #000; }
.vscroll { width: 10px; flex: none; display: flex; flex-direction: column; background: #f0f0f0; }
.vscroll i { width: 10px; height: 12px; background: #cdcdcd; }
.vscroll .end { margin-top: auto; }

.status { flex: none; height: 18px; display: flex; gap: 2px; align-items: center; padding: 0 1px; border-top: 1px solid #c0c0c0; font: 8px/13px "Open Sans", "Noto Sans", sans-serif; }
.cell { height: 15px; border: 1px solid #b0b0b0; text-align: center; white-space: nowrap; flex: none; }
.cell.ready { flex: 1; text-align: left; padding-left: 1px; }
.modes { display: flex; gap: 1px; }
.modes button { width: 16px; height: 16px; display: flex; background: #fff; }
.modes svg { width: 16px; height: 16px; }
.w1 { width: 32px; } .w2 { width: 105px; } .w3 { width: 35px; } .w4 { width: 65px; } .w5 { width: 56px; }
```
